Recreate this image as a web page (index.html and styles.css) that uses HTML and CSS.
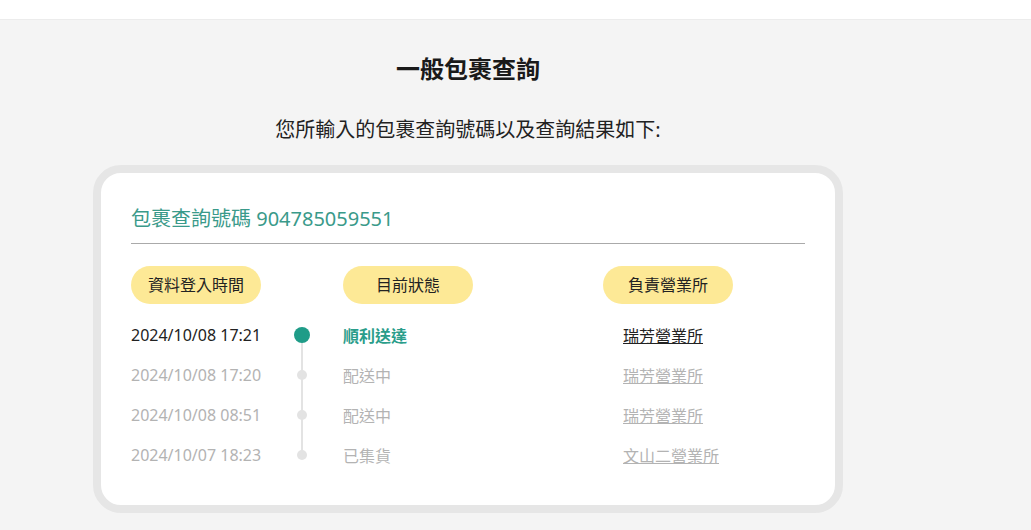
FILE: index.html
```html
<!DOCTYPE html>
<html lang="zh-Hant">
<head>
    <meta charset="UTF-8">
    <meta name="viewport" content="width=device-width, initial-scale=1.0">
    <title>一般包裹查詢</title>
    <link rel="stylesheet" href="styles.css">
</head>
<body>
    <div class="topbar"></div>

    <div class="page">
        <h1 class="page-title">一般包裹查詢</h1>
        <p class="page-desc">您所輸入的包裹查詢號碼以及查詢結果如下:</p>

        <div class="card">
            <h2 class="track-no">包裹查詢號碼 904785059551</h2>

            <div class="track-grid">
                <div class="pill">資料登入時間</div>
                <div></div>
                <div class="col-status"><div class="pill">目前狀態</div></div>
                <div><div class="pill">負責營業所</div></div>

                <!-- 最新一筆 -->
                <div class="time current">2024/10/08 17:21</div>
                <div class="marker first"><span class="dot big"></span></div>
                <div class="col-status status current">順利送達</div>
                <div class="office"><a href="#" class="current">瑞芳營業所</a></div>

                <div class="time">2024/10/08 17:20</div>
                <div class="marker"><span class="dot"></span></div>
                <div class="col-status status">配送中</div>
                <div class="office"><a href="#">瑞芳營業所</a></div>

                <div class="time">2024/10/08 08:51</div>
                <div class="marker"><span class="dot"></span></div>
                <div class="col-status status">配送中</div>
                <div class="office"><a href="#">瑞芳營業所</a></div>

                <div class="time">2024/10/07 18:23</div>
                <div class="marker last"><span class="dot"></span></div>
                <div class="col-status status">已集貨</div>
                <div class="office"><a href="#">文山二營業所</a></div>
            </div>
        </div>
    </div>
</body>
</html>
```

FILE: styles.css
```css
body {
    margin: 0;
    background: #f4f4f4;
    font-family: "Noto Sans", "Noto Sans CJK TC", sans-serif;
    color: #222;
}
.topbar {
    height: 19px;
    background: #fff;
    border-bottom: 1px solid #ececec;
}
.page {
    width: 750px;
    margin-left: 93px;
    padding-bottom: 40px;
}
.page-title {
    margin: 32px 0 0;
    text-align: center;
    font-size: 24px;
    line-height: 34px;
    font-weight: 700;
    color: #1a1a1a;
}
.page-desc {
    margin: 30px 0 0;
    text-align: center;
    font-size: 20px;
    line-height: 28px;
    color: #222;
}
.card {
    margin-top: 21px;
    background: #fff;
    border: 8px solid #e6e6e6;
    border-radius: 28px;
    padding: 32px 30px 30px;
}
.track-no {
    margin: 0;
    padding-bottom: 10px;
    border-bottom: 1px solid #aaa;
    font-size: 20px;
    line-height: 28px;
    font-weight: 400;
    color: #3a9a8a;
}
.track-grid {
    margin-top: 22px;
    display: grid;
    grid-template-columns: 160px 22px 290px 1fr;
    grid-auto-rows: 40px;
    grid-template-rows: 49px;
    align-items: center;
    font-size: 16px;
}
.track-grid > div:nth-child(-n+4) {
    align-self: start;
}
.pill {
    width: 130px;
    height: 38px;
    line-height: 38px;
    border-radius: 19px;
    background: #fde996;
    text-align: center;
    font-size: 16px;
    color: #222;
}
.col-status {
    padding-left: 30px;
}
.time {
    color: #b3b3b3;
}
.status {
    color: #b3b3b3;
}
.time.current {
    color: #222;
}
.status.current {
    color: #2a9d8a;
    font-weight: 600;
}
.office {
    padding-left: 20px;
}
.office a {
    color: #b3b3b3;
    text-decoration: underline;
}
.office a.current {
    color: #222;
}
.marker {
    height: 100%;
    position: relative;
    display: flex;
    align-items: center;
    justify-content: center;
}
.marker::before {
    content: "";
    position: absolute;
    left: 10px;
    width: 2px;
    top: 0;
    bottom: 0;
    background: #e3e3e3;
}
.marker.first::before {
    top: 50%;
}
.marker.last::before {
    bottom: 50%;
}
.dot {
    position: relative;
    width: 10px;
    height: 10px;
    border-radius: 50%;
    background: #e3e3e3;
}
.dot.big {
    width: 16px;
    height: 16px;
    background: #1f9c88;
}
```
